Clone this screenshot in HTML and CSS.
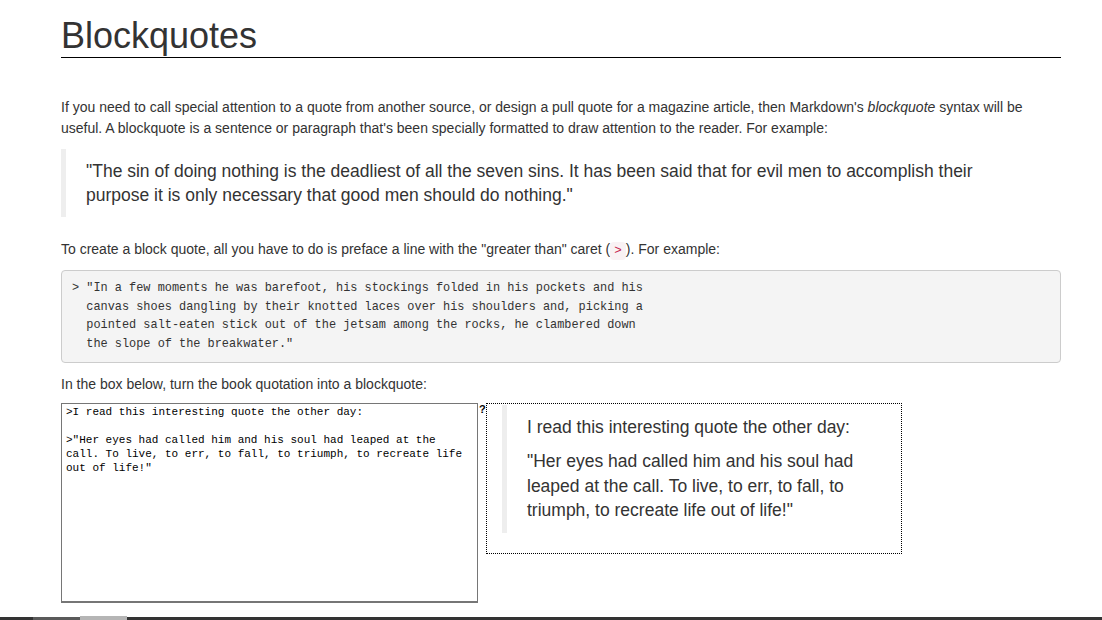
FILE: index.html
```html
<!DOCTYPE html>
<html lang="en">
<head>
<meta charset="utf-8">
<title>Blockquotes</title>
<link rel="stylesheet" href="styles.css">
</head>
<body>
<main class="page">
  <h1 class="title">Blockquotes</h1>
  <p class="intro">If you need to call special attention to a quote from another source, or design a pull quote for a magazine article, then Markdown's <em>blockquote</em> syntax will be useful. A blockquote is a sentence or paragraph that's been specially formatted to draw attention to the reader. For example:</p>
  <blockquote class="quote main-quote">
    <p>"The sin of doing nothing is the deadliest of all the seven sins. It has been said that for evil men to accomplish their purpose it is only necessary that good men should do nothing."</p>
  </blockquote>
  <p class="text">To create a block quote, all you have to do is preface a line with the "greater than" caret (<code class="inline-code">&gt;</code>). For example:</p>
<pre class="code">&gt; "In a few moments he was barefoot, his stockings folded in his pockets and his
  canvas shoes dangling by their knotted laces over his shoulders and, picking a
  pointed salt-eaten stick out of the jetsam among the rocks, he clambered down
  the slope of the breakwater."</pre>
  <p class="text task">In the box below, turn the book quotation into a blockquote:</p>
  <div class="exercise">
    <textarea class="editor" spellcheck="false">&gt;I read this interesting quote the other day:

&gt;"Her eyes had called him and his soul had leaped at the call. To live, to err, to fall, to triumph, to recreate life out of life!"</textarea>
    <span class="help">?</span>
    <div class="preview">
      <blockquote class="quote preview-quote">
        <p>I read this interesting quote the other day:</p>
        <p>"Her eyes had called him and his soul had leaped at the call. To live, to err, to fall, to triumph, to recreate life out of life!"</p>
      </blockquote>
    </div>
  </div>
</main>
<div class="hscroll"><span class="hscroll-a"></span><span class="hscroll-b"></span></div>
</body>
</html>
```
FILE: styles.css
```css
html, body {
  margin: 0;
  padding: 0;
  background: #fff;
}

body {
  font-family: "Liberation Sans", Arial, sans-serif;
  font-size: 14px;
  line-height: 21px;
  color: #333;
}

.page {
  margin: 0 41px 0 61px;
  padding-top: 16px;
}

.title {
  margin: 0;
  font-size: 36px;
  font-weight: normal;
  line-height: 1.1;
  padding-bottom: 1px;
  border-bottom: 1px solid #000;
  color: #333;
}

.intro {
  margin: 39px 0 10px;
}

.text {
  margin: 0 0 10px;
}

.task {
  margin-bottom: 8px;
}

.quote {
  margin: 0 0 20px;
  padding: 10px 20px;
  border-left: 5px solid #eee;
  font-size: 17.5px;
  line-height: 24px;
}

.main-quote {
  margin-bottom: 22px;
  padding-right: 32px;
}

.quote p {
  margin: 0 0 10px;
}

.quote p:last-child {
  margin-bottom: 0;
}

.inline-code {
  font-family: "Liberation Mono", monospace;
  font-size: 12.6px;
  line-height: 1;
  padding: 2px 4px;
  color: #c7254e;
  background: #f9f2f4;
  border-radius: 4px;
}

.code {
  margin: 0 0 11px;
  padding: 8.5px 10px;
  background: #f4f4f4;
  border: 1px solid #ccc;
  border-radius: 4px;
  font-family: "Liberation Mono", monospace;
  font-size: 11.9px;
  line-height: 18.6px;
  color: #333;
  white-space: pre;
}

.exercise {
  display: flex;
  align-items: flex-start;
}

.editor {
  width: 417px;
  height: 200px;
  box-sizing: border-box;
  margin: 0;
  padding: 1px 10px 0 4px;
  border: 1px solid #767676;
  border-bottom-width: 2px;
  font-family: "Liberation Mono", monospace;
  font-size: 11px;
  line-height: 14px;
  color: #000;
  resize: none;
  overflow: hidden;
  background: #fff;
}

.help {
  width: 8px;
  box-sizing: border-box;
  padding-left: 1px;
  font-size: 11px;
  font-weight: bold;
  line-height: 12px;
  color: #000;
}

.preview {
  width: 416px;
  box-sizing: border-box;
  border: 1px dotted #000;
  padding: 1px 15px 0;
}

.preview-quote {
  margin: 0 0 20px;
  line-height: 24.5px;
}

.hscroll {
  position: fixed;
  left: 0;
  right: 0;
  bottom: 0;
  height: 3px;
  background: #333;
  display: flex;
  align-items: flex-end;
}

.hscroll-a {
  margin-left: 33px;
  width: 47px;
  height: 3px;
  background: #5a5a5a;
}

.hscroll-b {
  width: 47px;
  height: 4px;
  background: #b5b5b5;
}
```
